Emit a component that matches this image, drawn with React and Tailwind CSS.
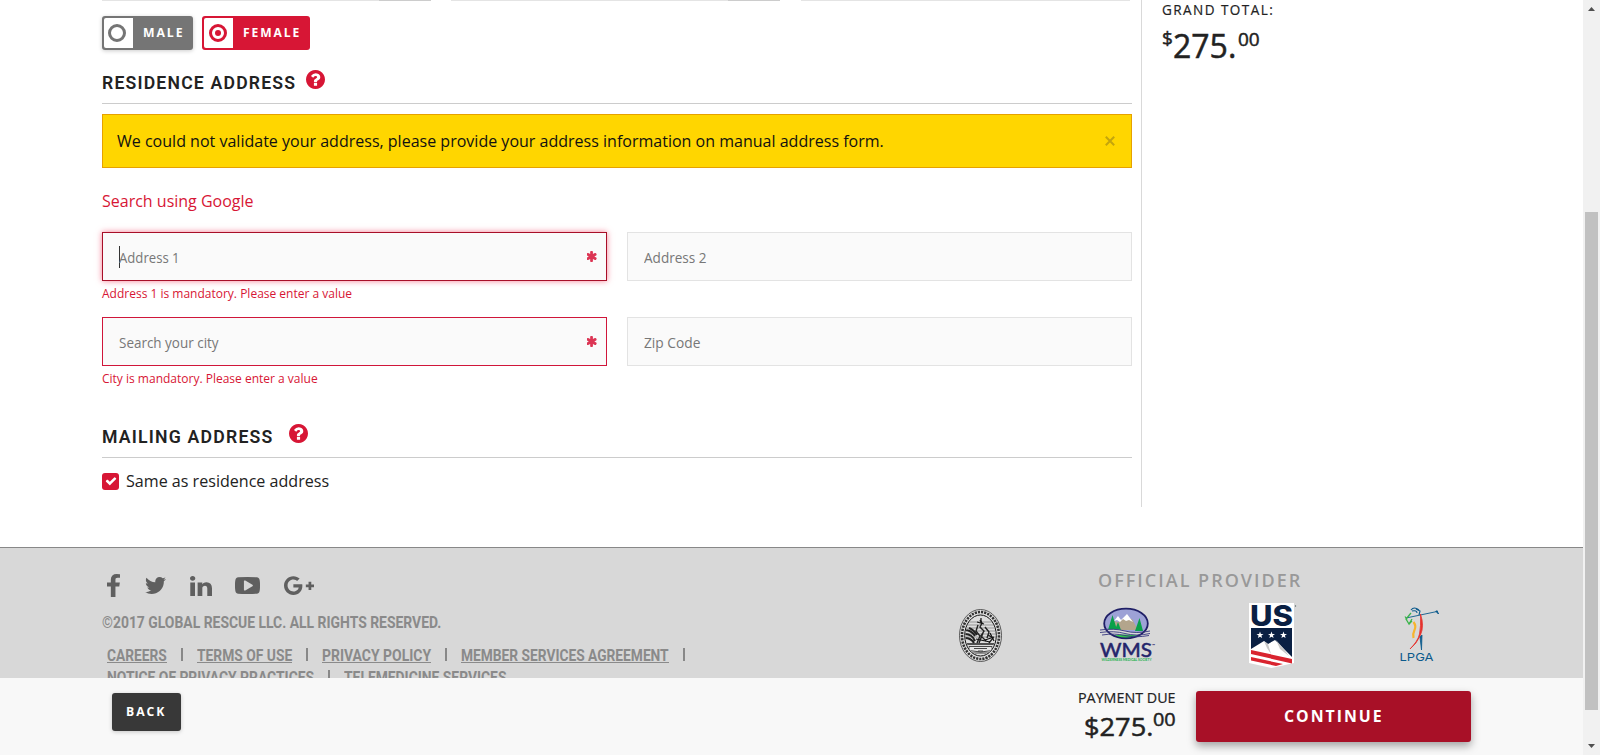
import { useLayoutEffect, useRef, useState } from "react";
import { FaGooglePlusG } from "react-icons/fa";

const QUESTION =
  "M1024 1376v-192q0-14-9-23t-23-9h-192q-14 0-23 9t-9 23v192q0 14 9 23t23 9h192q14 0 23-9t9-23zm256-672q0-88-55.5-163t-138.500-116-170-41q-243 0-371 213-15 24 8 42l132 100q7 6 19 6 16 0 25-12 53-68 86-92 34-24 86-24 48 0 85.500 26t37.500 59q0 38-20 61t-68 45q-63 28-115.500 86.500t-52.500 125.500v36q0 14 9 23t23 9h192q14 0 23-9t9-23q0-19 21.500-49.500t54.500-49.500q32-18 49-28.500t46-35 44.500-48 28-60.500 12.500-81zm384 192q0 209-103 385.500t-279.500 279.500-385.500 103-385.500-103-279.500-279.500-103-385.500 103-385.500 279.500-279.500 385.500-103 385.500 103 279.500 279.500 103 385.500z";
const ASTERISK =
  "M1482 1050q46 26 59.500 77.500t-12.500 97.500l-64 110q-26 46-77.500 59.500t-97.500-12.500l-266-153v307q0 52-38 90t-90 38h-128q-52 0-90-38t-38-90v-307l-266 153q-46 26-97.500 12.500t-77.500-59.500l-64-110q-26-46-12.500-97.500t59.500-77.500l266-154-266-154q-46-26-59.500-77.500t12.500-97.500l64-110q26-46 77.500-59.500t97.500 12.500l266 153v-307q0-52 38-90t90-38h128q52 0 90 38t38 90v307l266-153q46-26 97.500-12.500t77.500 59.500l64 110q26 46 12.500 97.500t-59.500 77.500l-266 154z";
const CHECK =
  "M1671 566q0 40-28 68l-724 724-136 136q-28 28-68 28t-68-28l-136-136-362-362q-28-28-28-68t28-68l136-136q28-28 68-28t68 28l294 295 656-657q28-28 68-28t68 28l136 136q28 28 28 68z";
const FACEBOOK =
  "M1343 12v264h-157q-86 0-116 36t-30 108v189h293l-39 296h-254v759h-306v-759h-255v-296h255v-218q0-186 104-288.500t277-102.500q147 0 228 12z";
const TWITTER =
  "M1684 408q-67 98-162 167 1 14 1 42 0 130-38 259.500t-115.500 248.500-184.500 210.500-258 146-323 54.500q-271 0-496-145 35 4 78 4 225 0 401-138-105-2-188-64.500t-114-159.500q33 5 61 5 43 0 85-11-112-23-185.500-111.500t-73.500-205.500v-4q68 38 146 41-66-44-105-115t-39-154q0-88 44-163 121 149 294.500 238.500t371.500 99.500q-8-38-8-74 0-134 94.500-228.500t228.500-94.500q140 0 236 102 109-21 205-78-37 115-142 178 93-10 186-50z";
const LINKEDIN =
  "M477 625v991h-330v-991h330zm21-306q1 73-50.500 122t-135.500 49h-2q-82 0-132-49t-50-122q0-74 51.500-122.500t134.500-48.500 133 48.500 51 122.500zm1166 729v568h-329v-530q0-105-40.500-164.500t-126.500-59.500q-63 0-105.500 34.500t-63.500 85.500q-11 30-11 81v553h-329q2-399 2-647t-1-296l-1-48h329v144h-2q20-32 41-56t56.500-52 87-43.500 114.500-15.500q171 0 275 113.500t104 332.500z";
const YOUTUBE =
  "M1280 896q0-37-30-54l-512-320q-31-20-65-2-33 18-33 56v640q0 38 33 56 16 8 31 8 20 0 34-10l512-320q30-17 30-54zm512 0q0 96-1 150t-8.500 136.500-22.500 147.500q-16 73-69 123t-124 58q-222 25-671 25t-671-25q-71-8-124.500-58t-69.500-123q-14-65-21.500-147.500t-8.500-136.500-1-150 1-150 8.500-136.500 22.500-147.500q16-73 69-123t124-58q222-25 671-25t671 25q71 8 124.500 58t69.500 123q14 65 21.500 147.500t8.500 136.500 1 150z";

function Glyph({ d, box = "0 0 1792 1792", className }) {
  return (
    <svg viewBox={box} className={className} fill="currentColor" preserveAspectRatio="none">
      <path d={d} />
    </svg>
  );
}

// Text condensed or expanded horizontally so that it fills its parent's width.
function Fit({ className = "", children }) {
  const ref = useRef(null);
  const [scale, setScale] = useState(1);
  useLayoutEffect(() => {
    const el = ref.current;
    setScale(el.parentElement.clientWidth / el.offsetWidth);
  }, []);
  return (
    <span className={`block whitespace-nowrap ${className}`}>
      <span ref={ref} className="inline-block origin-left" style={{ transform: `scaleX(${scale})` }}>
        {children}
      </span>
    </span>
  );
}

function SectionHeading({ children, width }) {
  return (
    <div className="flex h-[34px] border-b border-[#ccc]">
      <h2 className={`mt-[1px] font-['Roboto',sans-serif] text-[18px] leading-6 font-semibold text-[#222] ${width}`}>
        <Fit className="tracking-[1.2px]">{children}</Fit>
      </h2>
      <Glyph d={QUESTION} box="128 128 1536 1536" className="h-[19px] w-[19px] text-[#d71635]" />
    </div>
  );
}

function Field({ label, labelWidth, border, required, focused, error, errorWidth }) {
  return (
    <div className="h-[85px] w-[505px]">
      <div className={`flex h-[49px] items-center border bg-[#fafafa] pr-[9px] pl-4 ${border}`}>
        {focused && <span className="mr-[-1px] h-[22px] w-px bg-[#333]" />}
        <span className={`pt-[3px] text-[14px] leading-5 text-[#777] ${labelWidth}`}>
          <Fit>{label}</Fit>
        </span>
        {required && <Glyph d={ASTERISK} box="200 128 1392 1536" className="mb-[1px] ml-auto h-[11px] w-[10px] text-[#dc3554]" />}
      </div>
      {error && (
        <p className={`pt-[5px] text-[12px] leading-4 text-[#d71635] ${errorWidth}`}>
          <Fit>{error}</Fit>
        </p>
      )}
    </div>
  );
}

function ExplorersSeal() {
  return (
    <svg width="43" height="53" viewBox="0 0 43 53" className="mt-[6px]">
      <ellipse cx="21.500" cy="26.500" rx="21" ry="26" fill="#e4e4e4" stroke="#333" strokeWidth=".8" />
      <ellipse cx="21.500" cy="26.500" rx="18.500" ry="23.500" fill="none" stroke="#333" strokeWidth="2.600" strokeDasharray="2.200 1" />
      <ellipse cx="21.500" cy="26.500" rx="15.800" ry="20.500" fill="#ddd" stroke="#111" strokeWidth="1" />
      <clipPath id="seal">
        <ellipse cx="21.500" cy="26.500" rx="15" ry="19.800" />
      </clipPath>
      <g clipPath="url(#seal)" stroke="#222" fill="none">
        <path d="M5 13h33M5 16h33M5 19h33M5 22h33M5 25h33M5 28h33" strokeWidth=".7" stroke="#777" />
        <path d="M6 21q6 0 10 6M6 25q7 0 10 7M6 29q6 0 9 5M10 19q5 2 8 7" strokeWidth="2" />
        <path d="M21 11l2 3-2 4 4 4-3 5 5 5M19 16l-2 6 4 5-3 7M26 18l4 5-2 6M24 24l-4 10M29 26l5 3-4 5" strokeWidth="1.400" />
        <path d="M22 9v5M18 13l7 2M17 30l14 3M26 31l9-3M31 24l4 8" strokeWidth="1.200" stroke="#111" />
        <path d="M6 35h31" strokeWidth="1.500" />
        <path d="M10 37.500h23v4q-11 3-23 0z" fill="#e6e6e6" strokeWidth=".8" />
        <path d="M15 39.500h13M19 42h5M10 44h23" strokeWidth=".8" />
      </g>
    </svg>
  );
}

function WmsLogo() {
  return (
    <svg width="57" height="54" viewBox="0 0 57 54" className="mt-[5px] overflow-visible">
      <clipPath id="wms">
        <ellipse cx="26" cy="15.500" rx="21.500" ry="14.500" />
      </clipPath>
      <g clipPath="url(#wms)">
        <rect width="57" height="32" fill="#9da2d6" />
        <path d="M14 22V13l4 1 2-1 4-3 8 1 6 11z" fill="#b3a58c" />
        <path d="M14 13l4-5 3 4 6-6 6 8-4-2-3 1-3-2-3 3-3-2z" fill="#fff" />
        <path d="M8 22l4.500-15L17 22zM35 23l4.500-13L43 23zM15 22l3-8 3 8z" fill="#0aa14a" />
        <path d="M4 22q13-2 22 1t23 0v4H4z" fill="#d8d8d8" />
        <path d="M10 28q15-3 31 0l-8 5H18z" fill="#2fc24c" />
      </g>
      <ellipse cx="26" cy="15.500" rx="21.800" ry="14.800" fill="none" stroke="#1f1f66" strokeWidth="1.800" />
      <path d="M0 22q14-2 25 1t25 0M0 24.500q14-2 25 1t25 0M2 27q13-2 23 .5t24 0" fill="none" stroke="#37377f" strokeWidth=".9" />
      <text x="0" y="49" textLength="52" lengthAdjust="spacingAndGlyphs" fontFamily="Lato, sans-serif" fontSize="19" fill="#24246b" stroke="#24246b" strokeWidth=".5">WMS</text>
      <text x="52" y="39" fontFamily="Lato, sans-serif" fontSize="4" fontWeight="700" fill="#24246b">™</text>
      <text x="1.500" y="53" textLength="50" lengthAdjust="spacingAndGlyphs" fontFamily="Lato, sans-serif" fontWeight="700" fontSize="3.200" fill="#22b04d">WILDERNESS MEDICAL SOCIETY</text>
    </svg>
  );
}

function UsLogo() {
  const star = "M0-3.600L.9-1.100 3.500-1 1.400.6 2.100 3.100 0 1.700-2.100 3.100-1.400.6-3.500-1-.9-1.100z";
  return (
    <svg width="48" height="65" viewBox="0 0 48 65" className="overflow-visible">
      <path d="M0 0h45v60l-22.500 5L0 60z" fill="#fff" />
      <text x="1" y="22.500" textLength="43" lengthAdjust="spacingAndGlyphs" fontFamily="Inter, sans-serif" fontWeight="800" fontSize="28.500" fill="#0a2043">US</text>
      <path d="M2 25h41v31L2 48z" fill="#0a2043" />
      <path d="M2 46l13-8 4 3 7-4 17 17v3L2 49z" fill="#fff" />
      <path d="M15 38l3 7 4 6-3-10zM27 37l4 9 9 7-6-8z" fill="#c9c9c9" />
      <path d={star} transform="translate(11 32)" fill="#fff" />
      <path d={star} transform="translate(22.500 32)" fill="#fff" />
      <path d={star} transform="translate(34.500 32)" fill="#fff" />
      <path d="M2 47l41 9v4.500L2 51zM2 54l32 7-7 2L2 57.500z" fill="#d9242f" />
      <circle cx="46.500" cy="3" r=".7" fill="#566" />
    </svg>
  );
}

function LpgaLogo() {
  return (
    <svg width="40" height="56" viewBox="0 0 40 56" className="mt-[3px] overflow-visible" fill="none">
      <path d="M11 4q3-4 8 0M12 5q5-1 5 2M16 3l4 2-1 4" stroke="#0b5a8c" strokeWidth="1.100" />
      <path d="M6 12l31-6.500" stroke="#0b5a8c" strokeWidth=".9" />
      <path d="M35.500 5l3 3-1.500-3.500" fill="#0b5a8c" stroke="#0b5a8c" strokeWidth="1" />
      <path d="M11 7l-5 6 3 5 3-5" stroke="#3bb54a" strokeWidth="1.300" />
      <path d="M5 10.500l2 3M9 18l3-3" stroke="#3bb54a" strokeWidth="1.200" />
      <path d="M13.500 16q3 4 1 8t-1 8" stroke="#f6b52e" strokeWidth="2.200" />
      <path d="M20.500 8q4 12 0 21T10 43q8-8 9.500-15t1-20z" fill="#e5322d" stroke="#e5322d" strokeWidth=".8" />
      <path d="M22 29l-2 2 1.500 13 .5-15z" fill="#0b5a8c" stroke="#0b5a8c" strokeWidth=".8" />
      <text x="-.5" y="54.500" textLength="34" lengthAdjust="spacingAndGlyphs" fontFamily="Inter, sans-serif" fontSize="11" fill="#0b5a8c">LPGA</text>
    </svg>
  );
}

function Separator() {
  return <span className="mx-[14px] mt-[4px] h-[13px] w-[2px] shrink-0 bg-[#888]" />;
}

function FooterLink({ width, children }) {
  return (
    <a className={`block h-[19px] shrink-0 border-b border-[#8a8a8a] ${width}`}>
      <Fit className="leading-[23px]">{children}</Fit>
    </a>
  );
}

export default function App() {
  return (
    <div className="flex h-[755px] w-[1600px] overflow-hidden bg-white font-['Open_Sans',sans-serif] text-[#222]">
      <div className="flex w-[1583px] flex-col">
        <main className="flex h-[547px] pl-[102px]">
          <section className="w-[1030px]">
            <div className="flex h-px gap-[20px]">
              <div className="flex w-[329px]">
                <span className="flex-1 bg-[#e4e4e4]" />
                <span className="w-[52px] bg-[#ccc]" />
              </div>
              <div className="flex w-[329px]">
                <span className="flex-1 bg-[#e4e4e4]" />
                <span className="w-[52px] bg-[#ccc]" />
              </div>
              <span className="ml-[1px] w-[329px] bg-[#e4e4e4]" />
            </div>
            <div className="mt-[15px] flex h-[34px] gap-[9px] text-[12.500px] leading-[30px] font-bold text-white">
              <label className="flex w-[91px] rounded-[3px] bg-[#757575] p-[2px] shadow-[0_1px_4px_rgba(0,0,0,.2)]">
                <span className="flex w-[29px] items-center rounded-l-[2px] bg-white pl-[4px]">
                  <span className="h-[18px] w-[18px] rounded-full border-[3px] border-[#757575]" />
                </span>
                <span className="ml-[10px] w-[41px]"><Fit className="tracking-[2px]">MALE</Fit></span>
              </label>
              <label className="flex w-[108px] rounded-[3px] bg-[#d71635] p-[2px]">
                <span className="flex w-[29px] items-center rounded-l-[2px] bg-white pl-[5px]">
                  <span className="flex h-[18px] w-[18px] items-center justify-center rounded-full border-[3px] border-[#d71635]">
                    <span className="h-[6px] w-[6px] rounded-full bg-[#d71635]" />
                  </span>
                </span>
                <span className="ml-[10px] w-[58px]"><Fit className="tracking-[2px]">FEMALE</Fit></span>
              </label>
            </div>
            <div className="mt-[20px]">
              <SectionHeading width="mr-[10px] w-[194px]">RESIDENCE ADDRESS</SectionHeading>
            </div>
            <div className="mt-[10px] flex h-[54px] items-center border border-[#e6a100] bg-[#ffd600] pl-[14px] text-[16px] text-[#111]">
              <span className="w-[767px]"><Fit>We could not validate your address, please provide your address information on manual address form.</Fit></span>
              <svg width="10" height="10" viewBox="0 0 10 10" className="mb-[1px] ml-[221px]">
                <path d="M.8.800l8.400 8.400M9.200.800L.8 9.200" stroke="#c4a50c" strokeWidth="2" />
              </svg>
            </div>
            <a className="mt-[21px] block w-[152px] text-[16px] leading-6 text-[#d71635]"><Fit>Search using Google</Fit></a>
            <div className="mt-[19px] flex justify-between">
              <Field label="Address 1" labelWidth="w-[61px]" border="border-[#a80f28] shadow-[0_0_6px_rgba(240,20,60,.55)]" required focused error="Address 1 is mandatory. Please enter a value" errorWidth="w-[250px]" />
              <Field label="Address 2" labelWidth="w-[63px]" border="border-[#e3e3e3]" />
            </div>
            <div className="flex justify-between">
              <Field label="Search your city" labelWidth="w-[100px]" border="border-[#d0163a]" required error="City is mandatory. Please enter a value" errorWidth="w-[216px]" />
              <Field label="Zip Code" labelWidth="w-[56px]" border="border-[#e3e3e3]" />
            </div>
            <div className="mt-[22px]">
              <SectionHeading width="mr-[15px] w-[172px]">MAILING ADDRESS</SectionHeading>
            </div>
            <label className="mt-[11px] flex h-6 items-center text-[16px] leading-6">
              <span className="mr-[7px] flex h-[17px] w-[17px] items-center justify-center rounded-[3px] bg-[#d71635]">
                <Glyph d={CHECK} className="h-[12px] w-[12px] text-white" />
              </span>
              <span className="w-[203px]"><Fit>Same as residence address</Fit></span>
            </label>
          </section>
          <aside className="ml-[9px] h-[507px] border-l border-[#d9d9d9] pl-[20px]">
            <p className="w-[112px] text-[14px] leading-5 [-webkit-text-stroke:.2px_#222]"><Fit className="tracking-[1.500px]">GRAND TOTAL:</Fit></p>
            <p className="mt-[6px] flex [-webkit-text-stroke:.5px_#222]">
              <span className="w-[11px] text-[19px] leading-[25px]">$</span>
              <span className="w-[65px] text-[32px] leading-[40px]">275.</span>
              <span className="text-[19px] leading-[26px]">00</span>
            </p>
          </aside>
        </main>
        <footer className="flex h-[131px] overflow-hidden border-t border-[#888] bg-[#d8d8d8]">
          <div className="w-[620px] pl-[102px] font-['Roboto',sans-serif] text-[16px] font-bold text-[#8a8a8a]">
            <div className="mt-[26px] flex h-[23px] items-center pl-[5px] text-[#5f5f5f]">
              <Glyph d={FACEBOOK} box="479 0 864 1664" className="h-[23px] w-[13px]" />
              <Glyph d={TWITTER} box="108 256 1576 1280" className="ml-[25px] h-[17px] w-[21px]" />
              <Glyph d={LINKEDIN} box="128 148 1536 1468" className="ml-[24px] h-[20px] w-[22px]" />
              <Glyph d={YOUTUBE} box="0 256 1792 1280" className="ml-[23px] h-[17px] w-[25px]" />
              <FaGooglePlusG className="ml-[23px] h-[25px] w-[32px]" />
            </div>
            <p className="mt-[14px] w-[339px] leading-6"><Fit>©2017 GLOBAL RESCUE LLC. ALL RIGHTS RESERVED.</Fit></p>
            <div className="mt-[9px] flex h-[22px] pl-[5px]">
              <FooterLink width="w-[60px]">CAREERS</FooterLink>
              <Separator />
              <FooterLink width="w-[95px]">TERMS OF USE</FooterLink>
              <Separator />
              <FooterLink width="w-[109px]">PRIVACY POLICY</FooterLink>
              <Separator />
              <FooterLink width="w-[208px]">MEMBER SERVICES AGREEMENT</FooterLink>
              <Separator />
            </div>
            <div className="flex h-[23px] pl-[5px]">
              <FooterLink width="w-[207px]">NOTICE OF PRIVACY PRACTICES</FooterLink>
              <Separator />
              <FooterLink width="w-[162px]">TELEMEDICINE SERVICES</FooterLink>
            </div>
          </div>
          <div className="w-[860px] pt-[20px]">
            <h3 className="ml-[478px] w-[204px] text-[18px] leading-6 font-semibold text-[#999]"><Fit className="tracking-[2px]">OFFICIAL PROVIDER</Fit></h3>
            <div className="mt-[11px] ml-[339px] flex items-start">
              <ExplorersSeal />
              <div className="ml-[98px]"><WmsLogo /></div>
              <div className="ml-[92px]"><UsLogo /></div>
              <div className="ml-[103px]"><LpgaLogo /></div>
            </div>
          </div>
        </footer>
        <div className="flex h-[77px] bg-[#f8f8f8]">
          <button className="mt-[15px] ml-[112px] h-[38px] w-[69px] rounded-[3px] bg-[#383838] pt-[1px] pl-[14px] text-left text-[12.500px] font-bold text-white shadow-[0_1px_4px_rgba(0,0,0,.2)]">
            <span className="block w-[40px]"><Fit className="tracking-[2px]">BACK</Fit></span>
          </button>
          <div className="ml-[896px] w-[99px] pt-[10px] pl-[1px]">
            <p className="w-[98px] text-[14px] leading-5 [-webkit-text-stroke:.2px_#222]"><Fit>PAYMENT DUE</Fit></p>
            <p className="flex pl-[6px] [-webkit-text-stroke:.5px_#222]">
              <span className="w-[69px] text-[26px] leading-[36px]"><Fit>$275.</Fit></span>
              <span className="w-[23px] text-[19px] leading-[22px]"><Fit>00</Fit></span>
            </p>
          </div>
          <button className="mt-[13px] ml-[20px] h-[51px] w-[275px] rounded-[3px] bg-[#a81027] pb-[2px] pl-[88px] text-left text-[16px] font-bold text-white shadow-[0_4px_8px_rgba(0,0,0,.35)]">
            <span className="block w-[100px]"><Fit className="tracking-[2px]">CONTINUE</Fit></span>
          </button>
        </div>
      </div>
      <div className="flex w-[17px] flex-col items-center bg-[#f1f1f1]">
        <svg width="7" height="4" viewBox="0 0 7 4" className="mt-[7px]"><path d="M3.500 0L7 4H0z" fill="#505050" /></svg>
        <div className="mt-[201px] h-[498px] w-[13px] bg-[#c1c1c1]" />
        <svg width="7" height="4" viewBox="0 0 7 4" className="mt-[34px]"><path d="M3.500 4L7 0H0z" fill="#505050" /></svg>
      </div>
    </div>
  );
}
